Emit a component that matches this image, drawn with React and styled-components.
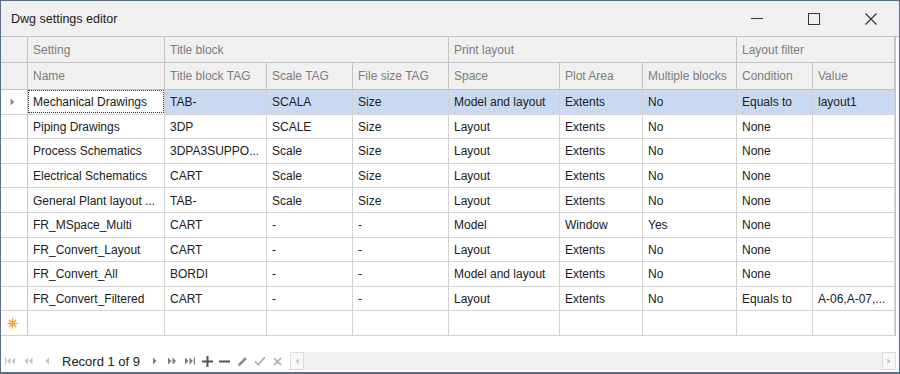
import React from 'react';
import styled, { createGlobalStyle } from 'styled-components';

const GlobalStyle = createGlobalStyle`
  html, body {
    margin: 0;
    padding: 0;
    background: #ffffff;
  }
  body {
    font-family: "Liberation Sans", Arial, sans-serif;
  }
`;

const Window = styled.div`
  box-sizing: border-box;
  width: 900px;
  height: 374px;
  border: 1px solid #5b6d8c;
  border-bottom-width: 2px;
  background: #ffffff;
  display: flex;
  flex-direction: column;
  overflow: hidden;
`;

const TitleBar = styled.div`
  height: 35px;
  flex: none;
  display: flex;
  align-items: center;
  background: #f0f0f0;
  padding-left: 10px;
`;

const Title = styled.div`
  flex: 1;
  font-size: 12.5px;
  color: #1a1a1a;
`;

const WinButton = styled.div`
  width: 57px;
  height: 35px;
  display: flex;
  align-items: center;
  justify-content: center;
`;

const Body = styled.div`
  flex: 1;
  display: flex;
  flex-direction: column;
  border-top: 1px solid #c4c4c4;
  padding-right: 3px;
`;

const Grid = styled.div`
  display: grid;
  grid-template-columns: 27px 137px 102px 86px 96px 111px 83px 94px 76px 82px;
  grid-template-rows: 26px 27px repeat(10, 24.6px);
  border-right: 1px solid #c4c4c4;
  width: fit-content;
  font-size: 12px;
`;

const HeadCell = styled.div`
  box-sizing: border-box;
  grid-column: ${p => p.span || 'auto'};
  display: flex;
  align-items: center;
  padding-left: 5px;
  background: #f0f0f0;
  color: #7d7d7d;
  border-right: 1px solid #c4c4c4;
  border-bottom: 1px solid #c4c4c4;
  white-space: nowrap;
  overflow: hidden;
`;

const Cell = styled.div`
  box-sizing: border-box;
  display: flex;
  align-items: center;
  padding-left: 5px;
  padding-top: 1px;
  color: #202020;
  background: ${p => (p.selected ? '#c9d9f2' : '#ffffff')};
  border-right: 1px solid #d2d2d2;
  border-bottom: 1px solid #d2d2d2;
  white-space: nowrap;
  overflow: hidden;
  position: relative;
`;

const FocusCell = styled(Cell)`
  &::after {
    content: '';
    position: absolute;
    inset: 0 0 1px 0;
    border: 1px dotted #333333;
  }
`;

const Indicator = styled.div`
  box-sizing: border-box;
  display: flex;
  align-items: center;
  justify-content: center;
  padding-right: 3px;
  padding-top: 1px;
  background: #ffffff;
  border-right: 1px solid #c4c4c4;
  border-bottom: 1px solid #d2d2d2;
`;

const Filler = styled.div`
  flex: 1;
`;

const Footer = styled.div`
  height: 20px;
  flex: none;
  display: flex;
  align-items: center;
  margin-bottom: 1px;
`;

const Navigator = styled.div`
  display: flex;
  align-items: center;
  width: 289px;
  flex: none;
  padding-left: 1px;
  box-sizing: border-box;
`;

const NavBtn = styled.div`
  width: ${p => p.w || 18}px;
  flex: none;
  height: 20px;
  display: flex;
  align-items: center;
  justify-content: center;
`;

const RecordText = styled.div`
  flex: none;
  white-space: nowrap;
  font-size: 13px;
  color: #222222;
  padding: 0 6px 0 6px;
`;

const ScrollBar = styled.div`
  flex: 1;
  height: 18px;
  background: #f0f0f0;
  display: flex;
  justify-content: space-between;
  align-items: center;
`;

const ScrollArrow = styled.div`
  width: 14px;
  height: 18px;
  box-sizing: border-box;
  background: #f8f8f8;
  border: 1px solid #dcdcdc;
  display: flex;
  align-items: center;
  justify-content: center;
`;

const Tri = ({ dir = 'right', color = '#9a9a9a', size = 5 }) => (
  <svg width={size} height={size * 1.6} viewBox="0 0 5 8">
    {dir === 'right'
      ? <path d="M0.5 0.5 L4.5 4 L0.5 7.5 Z" fill={color} />
      : <path d="M4.5 0.5 L0.5 4 L4.5 7.5 Z" fill={color} />}
  </svg>
);

const NavIcon = ({ kind, color }) => {
  const c = color;
  switch (kind) {
    case 'first':
      return (
        <svg width="12" height="8" viewBox="0 0 12 8">
          <rect x="0" y="0.5" width="1.2" height="7" fill={c} />
          <path d="M5.5 0.5 L2 4 L5.5 7.5 Z" fill={c} />
          <path d="M10 0.5 L6.5 4 L10 7.5 Z" fill={c} />
        </svg>
      );
    case 'prevPage':
      return (
        <svg width="10" height="8" viewBox="0 0 10 8">
          <path d="M4 0.5 L0.5 4 L4 7.5 Z" fill={c} />
          <path d="M8.5 0.5 L5 4 L8.5 7.5 Z" fill={c} />
        </svg>
      );
    case 'prev':
      return (
        <svg width="5" height="8" viewBox="0 0 5 8">
          <path d="M4 0.5 L0.5 4 L4 7.5 Z" fill={c} />
        </svg>
      );
    case 'next':
      return (
        <svg width="5" height="8" viewBox="0 0 5 8">
          <path d="M1 0.5 L4.5 4 L1 7.5 Z" fill={c} />
        </svg>
      );
    case 'nextPage':
      return (
        <svg width="10" height="8" viewBox="0 0 10 8">
          <path d="M1 0.5 L4.5 4 L1 7.5 Z" fill={c} />
          <path d="M5.5 0.5 L9 4 L5.5 7.5 Z" fill={c} />
        </svg>
      );
    case 'last':
      return (
        <svg width="12" height="8" viewBox="0 0 12 8">
          <path d="M1 0.5 L4.5 4 L1 7.5 Z" fill={c} />
          <path d="M5.5 0.5 L9 4 L5.5 7.5 Z" fill={c} />
          <rect x="9.8" y="0.5" width="1.2" height="7" fill={c} />
        </svg>
      );
    case 'plus':
      return (
        <svg width="11" height="11" viewBox="0 0 11 11">
          <rect x="0" y="4.5" width="11" height="2" fill={c} />
          <rect x="4.5" y="0" width="2" height="11" fill={c} />
        </svg>
      );
    case 'minus':
      return (
        <svg width="11" height="11" viewBox="0 0 11 11">
          <rect x="0" y="4.5" width="11" height="2" fill={c} />
        </svg>
      );
    case 'edit':
      return (
        <svg width="11" height="11" viewBox="0 0 11 11">
          <path d="M1 10 L1.6 7.6 L8 1.2 L9.8 3 L3.4 9.4 Z" fill={c} />
        </svg>
      );
    case 'check':
      return (
        <svg width="12" height="10" viewBox="0 0 12 10">
          <path d="M1 5.5 L4.2 8.6 L11 1.2" fill="none" stroke={c} strokeWidth="1.6" />
        </svg>
      );
    case 'cancel':
      return (
        <svg width="9" height="9" viewBox="0 0 9 9">
          <path d="M1 1 L8 8 M8 1 L1 8" fill="none" stroke={c} strokeWidth="1.6" />
        </svg>
      );
    default:
      return null;
  }
};

const NewRowStar = () => (
  <svg width="11" height="11" viewBox="0 0 11 11">
    <g stroke="#f29a3c" strokeWidth="1.3" strokeLinecap="round">
      <path d="M5.5 1 L5.5 10" />
      <path d="M1 5.5 L10 5.5" />
      <path d="M2.3 2.3 L8.7 8.7" />
      <path d="M8.7 2.3 L2.3 8.7" />
    </g>
    <circle cx="5.5" cy="5.5" r="2.4" fill="#f7a64c" />
  </svg>
);

const rows = [
  ['Mechanical Drawings', 'TAB-', 'SCALA', 'Size', 'Model and layout', 'Extents', 'No', 'Equals to', 'layout1'],
  ['Piping Drawings', '3DP', 'SCALE', 'Size', 'Layout', 'Extents', 'No', 'None', ''],
  ['Process Schematics', '3DPA3SUPPO...', 'Scale', 'Size', 'Layout', 'Extents', 'No', 'None', ''],
  ['Electrical Schematics', 'CART', 'Scale', 'Size', 'Layout', 'Extents', 'No', 'None', ''],
  ['General Plant layout ...', 'TAB-', 'Scale', 'Size', 'Layout', 'Extents', 'No', 'None', ''],
  ['FR_MSpace_Multi', 'CART', '-', '-', 'Model', 'Window', 'Yes', 'None', ''],
  ['FR_Convert_Layout', 'CART', '-', '-', 'Layout', 'Extents', 'No', 'None', ''],
  ['FR_Convert_All', 'BORDI', '-', '-', 'Model and layout', 'Extents', 'No', 'None', ''],
  ['FR_Convert_Filtered', 'CART', '-', '-', 'Layout', 'Extents', 'No', 'Equals to', 'A-06,A-07,...'],
];

const columns = ['Name', 'Title block TAG', 'Scale TAG', 'File size TAG', 'Space', 'Plot Area', 'Multiple blocks', 'Condition', 'Value'];

export default function App() {
  return (
    <>
      <GlobalStyle />
      <Window>
        <TitleBar>
          <Title>Dwg settings editor</Title>
          <WinButton>
            <svg width="12" height="2" viewBox="0 0 12 2"><rect width="12" height="1" fill="#333" /></svg>
          </WinButton>
          <WinButton>
            <svg width="12" height="12" viewBox="0 0 12 12"><rect x="0.5" y="0.5" width="11" height="11" fill="none" stroke="#333" /></svg>
          </WinButton>
          <WinButton>
            <svg width="12" height="12" viewBox="0 0 12 12"><path d="M0.5 0.5 L11.5 11.5 M11.5 0.5 L0.5 11.5" stroke="#333" strokeWidth="1.1" /></svg>
          </WinButton>
        </TitleBar>
        <Body>
          <Grid>
            <HeadCell />
            <HeadCell>Setting</HeadCell>
            <HeadCell span="span 3">Title block</HeadCell>
            <HeadCell span="span 3">Print layout</HeadCell>
            <HeadCell span="span 2">Layout filter</HeadCell>

            <HeadCell />
            {columns.map(c => <HeadCell key={c}>{c}</HeadCell>)}

            {rows.map((r, i) => (
              <React.Fragment key={i}>
                <Indicator>{i === 0 && <Tri color="#8c8c8c" />}</Indicator>
                {r.map((v, j) =>
                  i === 0 && j === 0
                    ? <FocusCell key={j}>{v}</FocusCell>
                    : <Cell key={j} selected={i === 0}>{v}</Cell>
                )}
              </React.Fragment>
            ))}

            <Indicator><NewRowStar /></Indicator>
            {columns.map(c => <Cell key={c} />)}
          </Grid>
          <Filler />
          <Footer>
            <Navigator>
              <NavBtn><NavIcon kind="first" color="#c4c4c4" /></NavBtn>
              <NavBtn><NavIcon kind="prevPage" color="#c4c4c4" /></NavBtn>
              <NavBtn><NavIcon kind="prev" color="#c4c4c4" /></NavBtn>
              <RecordText>Record 1 of 9</RecordText>
              <NavBtn w={17.5}><NavIcon kind="next" color="#7a7a7a" /></NavBtn>
              <NavBtn w={17.5}><NavIcon kind="nextPage" color="#7a7a7a" /></NavBtn>
              <NavBtn w={17.5}><NavIcon kind="last" color="#7a7a7a" /></NavBtn>
              <NavBtn w={17.5}><NavIcon kind="plus" color="#555555" /></NavBtn>
              <NavBtn w={17.5}><NavIcon kind="minus" color="#555555" /></NavBtn>
              <NavBtn w={17.5}><NavIcon kind="edit" color="#8a8a8a" /></NavBtn>
              <NavBtn w={17.5}><NavIcon kind="check" color="#a8a8a8" /></NavBtn>
              <NavBtn w={17.5}><NavIcon kind="cancel" color="#a8a8a8" /></NavBtn>
            </Navigator>
            <ScrollBar>
              <ScrollArrow><Tri dir="left" color="#c4c4c4" size={4} /></ScrollArrow>
              <ScrollArrow><Tri dir="right" color="#c4c4c4" size={4} /></ScrollArrow>
            </ScrollBar>
          </Footer>
        </Body>
      </Window>
    </>
  );
}
